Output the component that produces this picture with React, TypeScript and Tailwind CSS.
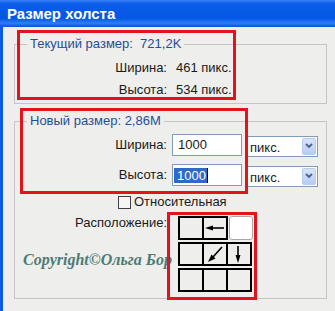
import React from "react";

function Cell({ children, className = "" }: { children?: React.ReactNode; className?: string }) {
  return (
    <div className={`w-[26px] h-[24px] border-2 border-black -ml-[2px] first:ml-0 flex items-center justify-center ${className}`}>
      {children}
    </div>
  );
}

export default function App() {
  return (
    <div className="relative w-[335px] h-[311px] overflow-hidden bg-[#eeeeec] font-['Liberation_Sans',Arial,sans-serif] text-[13px] text-[#1a1a1a]">
      <div className="h-[27px] flex items-center pl-[7px] bg-[linear-gradient(to_bottom,#3a80f5_0%,#0a5de8_14%,#0457e6_68%,#2b7df8_86%,#0a50d6_100%)]">
        <span className="text-white font-bold text-[15px] leading-none">Размер холста</span>
      </div>
      <div className="flex h-[284px]">
        <div className="w-[3px] bg-[#0a5ae6]" />
        <div className="flex-1 pl-[11px] pr-[8px] pt-[10px]">
          <fieldset className="border border-[#c5c5c1] pb-[2px]">
            <legend className="ml-[12px] px-[3px] text-[#1f4f98] leading-[14px]">Текущий размер:&nbsp; 721,2K</legend>
            <div className="mt-[6px] flex flex-col">
              <div className="h-[22px] flex items-center">
                <span className="w-[152px] text-right">Ширина:</span>
                <span className="ml-[9px]">461 пикс.</span>
              </div>
              <div className="h-[22px] flex items-center">
                <span className="w-[152px] text-right">Высота:</span>
                <span className="ml-[9px]">534 пикс.</span>
              </div>
            </div>
          </fieldset>
          <fieldset className="mt-[10px] border border-[#c5c5c1] pb-[6px]">
            <legend className="ml-[12px] px-[3px] text-[#1f4f98] leading-[14px]">Новый размер: 2,86М</legend>
            <div className="mt-[6px] flex flex-col">
              <div className="h-[22px] flex items-center">
                <span className="w-[152px] text-right">Ширина:</span>
                <div className="ml-[5px] w-[70px] h-[22px] border border-[#7f9db9] bg-white flex items-center pl-[5px]">1000</div>
                <Dropdown />
              </div>
              <div className="mt-[8px] h-[22px] flex items-center">
                <span className="w-[152px] text-right">Высота:</span>
                <div className="ml-[5px] w-[70px] h-[22px] border border-[#7f9db9] bg-white flex items-center pl-[1px]">
                  <span className="bg-[#316ac5] text-white pl-[3px] pr-[1px] leading-[15px]">1000</span>
                  <span className="w-[1px] h-[15px] bg-black" />
                </div>
                <Dropdown />
              </div>
              <div className="mt-[9px] h-[14px] flex items-center pl-[103px]">
                <span className="w-[13px] h-[13px] border border-[#3a3f4a] bg-[#f6f6f2]" />
                <span className="ml-[3px] leading-[14px]">Относительная</span>
              </div>
              <div className="mt-[7px] flex">
                <div className="w-[152px] flex flex-col">
                  <span className="text-right leading-[14px]">Расположение:</span>
                  <span className="mt-[21px] pl-[8px] font-['Liberation_Serif',serif] italic font-bold text-[16px] text-[#4d7c75] leading-[18px] whitespace-nowrap">
                    Copyright©Ольга Бор
                  </span>
                </div>
                <div className="ml-[11px] flex flex-col gap-[2px]">
                  <div className="flex">
                    <Cell />
                    <Cell>
                      <svg width="22" height="20" viewBox="0 0 22 20">
                        <path d="M1 10 L9 7.5 L9 12.5 Z" fill="#000" />
                        <line x1="8" y1="10" x2="20" y2="10" stroke="#000" strokeWidth="1.6" />
                      </svg>
                    </Cell>
                    <div className="w-[24px] h-[24px] ml-[1px] border border-[#a8a8a8] rounded-[3px] bg-white" />
                  </div>
                  <div className="flex">
                    <Cell />
                    <Cell>
                      <svg width="22" height="20" viewBox="0 0 22 20">
                        <path d="M4 18 L7.5 10.5 L11.5 14.5 Z" fill="#000" />
                        <line x1="9" y1="13" x2="18" y2="3" stroke="#000" strokeWidth="1.6" />
                      </svg>
                    </Cell>
                    <Cell>
                      <svg width="22" height="20" viewBox="0 0 22 20">
                        <path d="M10 19 L7.5 11 L12.5 11 Z" fill="#000" />
                        <line x1="10" y1="2" x2="10" y2="12" stroke="#000" strokeWidth="1.6" />
                      </svg>
                    </Cell>
                  </div>
                  <div className="flex">
                    <Cell />
                    <Cell />
                    <Cell />
                  </div>
                </div>
              </div>
            </div>
          </fieldset>
        </div>
      </div>
      <div className="absolute left-[17px] top-[30px] w-[219px] h-[70px] border-[3px] border-[#e3121b]" />
      <div className="absolute left-[20px] top-[108px] w-[228px] h-[86px] border-[3px] border-[#e3121b]" />
      <div className="absolute left-[167px] top-[212px] w-[90px] h-[88px] border-[3px] border-[#e3121b]" />
    </div>
  );
}

function Dropdown() {
  return (
    <div className="ml-[5px] mt-[2px] w-[71px] h-[21px] border border-[#7f9db9] bg-white flex items-center justify-between pl-[2px] pr-[1px]">
      <span className="mt-[3px]">пикс.</span>
      <div className="w-[14px] h-[17px] rounded-[2px] border border-[#b9cbf0] bg-[linear-gradient(to_bottom,#d8e4fb,#b6cbf6)] flex items-center justify-center">
        <svg width="8" height="6" viewBox="0 0 8 6">
          <path d="M1 1 L4 4 L7 1" fill="none" stroke="#4d6185" strokeWidth="1.8" />
        </svg>
      </div>
    </div>
  );
}
